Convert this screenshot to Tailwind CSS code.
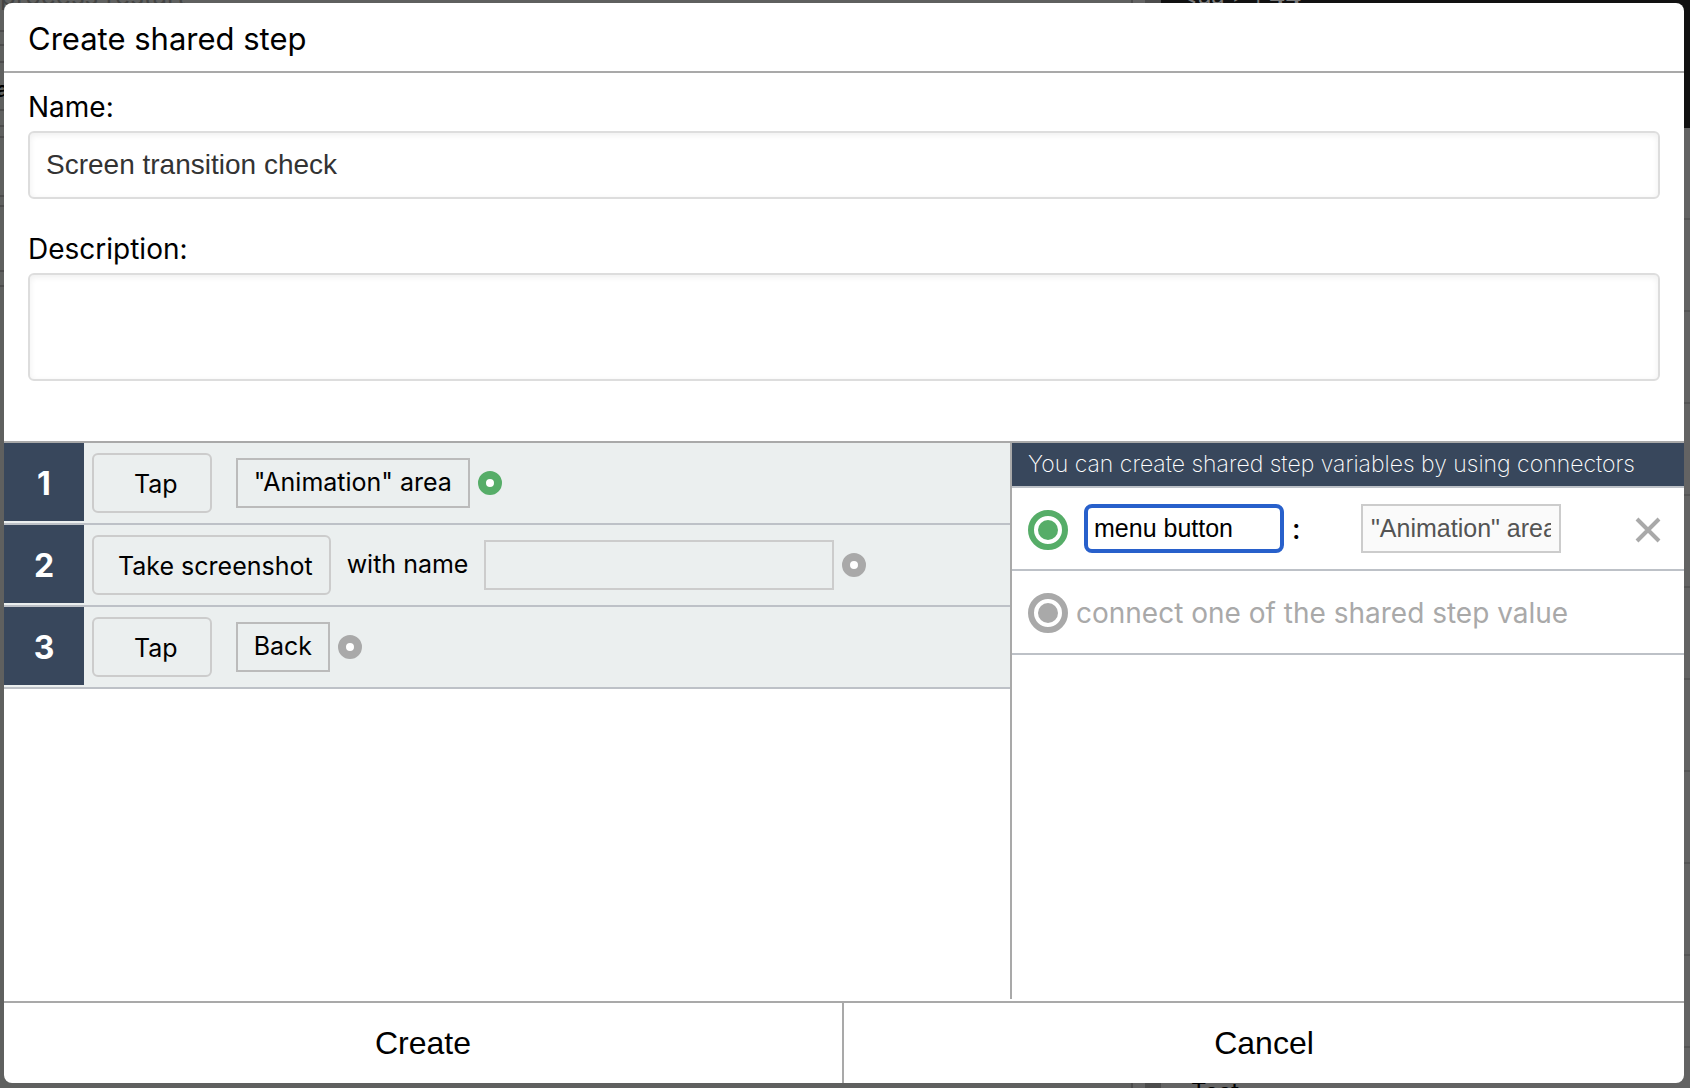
<!DOCTYPE html>
<html lang="en">
<head>
    <meta charset="UTF-8">
    <meta name="viewport" content="width=device-width, initial-scale=1.0">
    <title>Create shared step</title>
    <script src="https://cdn.jsdelivr.net/npm/@tailwindcss/browser@4"></script>
</head>
<body class="relative h-screen overflow-hidden bg-[#5f605f] font-['Inter',sans-serif] text-black">
    <!-- Dimmed page behind the dialog -->
    <div class="absolute inset-0 overflow-hidden" aria-hidden="true">
        <svg class="absolute top-0 left-0 h-72 w-2 text-[#4c4c4c]" fill="none" stroke="currentColor" stroke-width="2">
            <path d="M0 31h8M0 45h8M0 62h8M0 110h8M0 126h8M0 137h8M0 196h8M0 206h8M0 271h8M0 286h8"/>
        </svg>
        <div class="absolute -top-5 left-0 text-[26px] leading-8 text-[#434443]">process restart</div>
        <div class="absolute top-[73px] -left-1 text-[22px] leading-8 font-semibold text-black">a</div>
        <div class="absolute inset-y-0 right-0 w-[559px] border-l-2 border-[#4c4c4c] bg-[#636363]">
            <div class="absolute inset-y-0 left-3 w-4 bg-[#4c4c4c]"></div>
            <svg class="absolute top-0 right-0 h-full w-2 text-[#555555]" fill="none" stroke="currentColor" stroke-width="2">
                <path d="M0 219h8M0 311h8M0 403h8M0 495h8M0 587h8M0 679h8M0 771h8M0 863h8M0 955h8M0 1047h8"/>
            </svg>
        </div>
        <div class="absolute top-0 right-0 h-32 w-[529px] bg-[#111111]"></div>
        <div class="absolute -top-5 left-[1182px] text-[24px] leading-8 text-[#7a7a7a]">&lt;aa &gt; | <b>44</b></div>
        <div class="absolute top-[1078px] left-[1191px] text-[24px] leading-7 text-black">Test</div>
    </div>

    <div class="relative flex h-full px-1 pt-[3px] pr-1.5 pb-[5px]">
        <form id="dialog" role="dialog" aria-labelledby="title" class="flex min-w-0 flex-1 flex-col overflow-hidden rounded-lg bg-white">
            <header class="border-b-2 border-[#a9a9a9] px-6 pt-[18px] pb-3.5">
                <h1 id="title" class="text-[31px] leading-9">Create shared step</h1>
            </header>

            <div class="flex flex-col px-6 pt-4">
                <label for="name" class="text-[28px] leading-9">Name:</label>
                <input id="name" type="text" value="Screen transition check" class="mt-1.5 h-[68px] rounded-md border-2 border-[#dddddd] px-4 font-['Liberation_Sans',sans-serif] text-[28px] text-[#333333] shadow-[inset_0_2px_6px_#eeeeee] outline-none">
                <label for="description" class="mt-8 text-[28px] leading-9">Description:</label>
                <textarea id="description" class="mt-1.5 h-[108px] resize-none rounded-md border-2 border-[#dddddd] px-4 py-3 font-['Liberation_Sans',sans-serif] text-[28px] text-[#333333] shadow-[inset_0_2px_6px_#eeeeee] outline-none"></textarea>
            </div>

            <div class="mt-[60px] mb-0.5 flex min-h-0 flex-1 border-t-2 border-[#a9a9a9]">
                <ol class="flex w-3/5 flex-col border-r-2 border-[#a9a9a9] text-[25px]">
                    <li class="flex h-[82px] items-start border-b-2 border-[#bdc1c7] bg-[#ebefef]">
                        <div class="flex h-[78px] w-20 items-center justify-center bg-[#38475c] pt-1 text-[32px] font-bold text-white">1</div>
                        <div class="flex h-20 items-center pl-2">
                            <button type="button" class="h-[60px] rounded-md border-2 border-[#cccccc] pt-1 pr-8 pl-10">Tap</button>
                            <button type="button" class="ml-6 h-[50px] border-2 border-[#bbbbbb] px-4">"Animation" area</button>
                            <button type="button" aria-label="Connector" class="ml-2 size-6 rounded-full border-8 border-[#56ad68] bg-white"></button>
                        </div>
                    </li>
                    <li class="flex h-[82px] items-start border-b-2 border-[#bdc1c7] bg-[#ebefef]">
                        <div class="flex h-[78px] w-20 items-center justify-center bg-[#38475c] pt-1 text-[32px] font-bold text-white">2</div>
                        <div class="flex h-20 items-center pl-2">
                            <button type="button" class="h-[60px] rounded-md border-2 border-[#cccccc] pt-1 pr-4 pl-6">Take screenshot</button>
                            <label for="shot" class="ml-4">with name</label>
                            <input id="shot" type="text" class="ml-4 h-[50px] w-[350px] border-2 border-[#cccccc] px-2 outline-none">
                            <button type="button" aria-label="Connector" class="ml-2 size-6 rounded-full border-8 border-[#a9a9a9] bg-white"></button>
                        </div>
                    </li>
                    <li class="flex h-[82px] items-start border-b-2 border-[#bdc1c7] bg-[#ebefef]">
                        <div class="flex h-[78px] w-20 items-center justify-center bg-[#38475c] pt-1 text-[32px] font-bold text-white">3</div>
                        <div class="flex h-20 items-center pl-2">
                            <button type="button" class="h-[60px] rounded-md border-2 border-[#cccccc] pt-1 pr-8 pl-10">Tap</button>
                            <button type="button" class="ml-6 h-[50px] border-2 border-[#bbbbbb] px-4">Back</button>
                            <button type="button" aria-label="Connector" class="ml-2 size-6 rounded-full border-8 border-[#a9a9a9] bg-white"></button>
                        </div>
                    </li>
                </ol>

                <section class="flex min-w-0 flex-1 flex-col">
                    <p class="border-b-2 border-[#bdc1c7] bg-[#38475c] px-4 text-[23px] leading-[43px] font-extralight whitespace-nowrap text-white">You can create shared step variables by using connectors</p>
                    <div class="flex h-[83px] items-center border-b-2 border-[#bdc1c7] px-4">
                        <svg class="mt-0.5 size-10 text-[#56ad68]" viewBox="0 0 40 40" fill="currentColor">
                            <circle cx="20" cy="20" r="17" fill="none" stroke="currentColor" stroke-width="6"/>
                            <circle cx="20" cy="20" r="10"/>
                        </svg>
                        <input id="variable" type="text" value="menu button" aria-label="Variable name" class="ml-4 h-[49px] w-[200px] rounded-lg border-4 border-[#2860cb] px-1.5 font-['Liberation_Sans',sans-serif] text-[25px] outline-none">
                        <span class="ml-2 text-[28px] font-medium">:</span>
                        <input type="text" value='"Animation" area' readonly aria-label="Variable value" class="ml-auto h-[49px] w-[200px] border-2 border-[#cccccc] bg-[#fafafa] px-2 font-['Liberation_Sans',sans-serif] text-[25px] text-[#545454] outline-none">
                        <button type="button" id="remove" aria-label="Remove variable" class="mt-0.5 mr-1.5 ml-[73px] text-[#a9a9a9]">
                            <svg class="size-7" viewBox="0 0 28 28" fill="none" stroke="currentColor" stroke-width="4"><path d="M3 3l22 22M25 3L3 25"/></svg>
                        </button>
                    </div>
                    <div class="flex h-[84px] items-center border-b-2 border-[#bdc1c7] px-4 pt-0.5 text-[#a9a9a9]">
                        <svg class="size-10" viewBox="0 0 40 40" fill="currentColor">
                            <circle cx="20" cy="20" r="17" fill="none" stroke="currentColor" stroke-width="6"/>
                            <circle cx="20" cy="20" r="10"/>
                        </svg>
                        <span class="ml-2 text-[28px] whitespace-nowrap">connect one of the shared step value</span>
                    </div>
                </section>
            </div>

            <footer class="grid grid-cols-2 border-t-2 border-[#a9a9a9] font-['Liberation_Sans',sans-serif] text-[32px]">
                <button type="submit" class="h-20 border-r-2 border-[#a9a9a9]">Create</button>
                <button type="button" class="h-20">Cancel</button>
            </footer>
        </form>
    </div>

    <script>
        const dialog = document.getElementById('dialog');
        const variable = document.getElementById('variable');
        const removeButton = document.getElementById('remove');

        dialog.addEventListener('submit', (event) => event.preventDefault());
        removeButton.addEventListener('click', () => {
            variable.value = '';
        });
    </script>
</body>
</html>
